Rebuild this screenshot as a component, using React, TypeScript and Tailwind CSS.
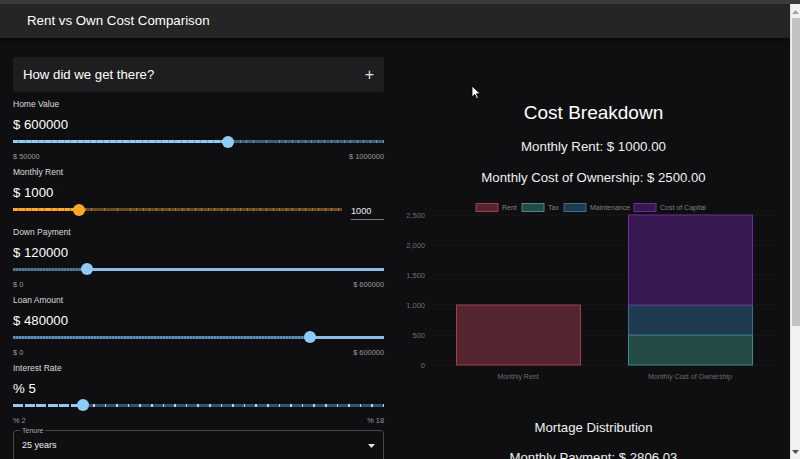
import React from 'react';

interface SliderProps {
  pct: number;
  color: string; // thumb + track colour
  activeTrack: string; // classes for left part
  restTrack: string; // classes for right part
}

function Slider({ pct, color, activeTrack, restTrack }: SliderProps) {
  return (
    <div className="relative h-[13px] flex items-center">
      <div className={`h-[3px] ${activeTrack}`} style={{ width: `${pct}%` }} />
      <div className={`h-[3px] flex-1 ${restTrack}`} />
      <div
        className="absolute top-[0.5px] w-[12px] h-[12px] rounded-full -ml-[6px]"
        style={{ left: `${pct}%`, backgroundColor: color }}
      />
    </div>
  );
}

function FieldLabel({ children }: { children: React.ReactNode }) {
  return <div className="h-[13px] leading-[13px] text-[8.5px] text-[#dcdcdc]">{children}</div>;
}

function FieldValue({ children }: { children: React.ReactNode }) {
  return <div className="mt-[4px] h-[20px] leading-[20px] text-[13.2px] text-white">{children}</div>;
}

function MinMax({ min, max }: { min: string; max: string }) {
  return (
    <div className="mt-[4px] mb-[4px] h-[10px] leading-[10px] flex justify-between text-[7.4px] text-[#9a9a9a]">
      <span>{min}</span>
      <span>{max}</span>
    </div>
  );
}

const dotsDark = 'bg-[#90caf9] bg-[repeating-linear-gradient(90deg,transparent_0_5.5px,rgba(0,0,0,0.22)_5.5px_6.5px)]';
const dotsDim = 'bg-[#3f5f78] bg-[repeating-linear-gradient(90deg,transparent_0_5.5px,rgba(170,210,240,0.45)_5.5px_6.5px)]';

const chartFont = 'Liberation Sans, Arial, sans-serif';

function CostChart() {
  const y = (v: number) => 166 - v * 0.06;
  const ticks = [2500, 2000, 1500, 1000, 500, 0];
  const legend = [
    { x: 79, label: 'Rent', fill: '#55252f', stroke: '#a33d58' },
    { x: 125, label: 'Tax', fill: '#244a45', stroke: '#3f8f88' },
    { x: 167, label: 'Maintenance', fill: '#1f3b50', stroke: '#3d6d90' },
    { x: 237, label: 'Cost of Capital', fill: '#371850', stroke: '#6b2c9c' },
  ];
  return (
    <svg width="393" height="184" viewBox="0 0 393 184" className="block">
      {legend.map(l => (
        <g key={l.label}>
          <rect x={l.x} y={4.5} width={22} height={8} fill={l.fill} stroke={l.stroke} strokeWidth={1} />
          <text x={l.x + 26} y={11} fontSize={7} fill="#808080" fontFamily={chartFont}>
            {l.label}
          </text>
        </g>
      ))}
      {ticks.map(t => (
        <g key={t}>
          <line x1={35} x2={380} y1={y(t)} y2={y(t)} stroke="#18181a" strokeWidth={1} />
          <text x={28} y={y(t) + 2.5} textAnchor="end" fontSize={7.5} fill="#6e6e6e" fontFamily={chartFont}>
            {t.toLocaleString('en-US')}
          </text>
        </g>
      ))}
      {/* rent bar */}
      <rect x={59.5} y={y(1000)} width={124} height={y(0) - y(1000)} fill="#55252f" stroke="#a33d58" strokeWidth={1} />
      {/* ownership stack */}
      <rect x={231.5} y={y(500)} width={124} height={y(0) - y(500)} fill="#244a45" stroke="#3f8f88" strokeWidth={1} />
      <rect x={231.5} y={y(1000)} width={124} height={y(500) - y(1000)} fill="#1f3b50" stroke="#3d6d90" strokeWidth={1} />
      <rect x={231.5} y={y(2500)} width={124} height={y(1000) - y(2500)} fill="#371850" stroke="#6b2c9c" strokeWidth={1} />
      <text x={121} y={179.5} textAnchor="middle" fontSize={7} fill="#6e6e6e" fontFamily={chartFont}>
        Monthly Rent
      </text>
      <text x={293} y={179.5} textAnchor="middle" fontSize={7} fill="#6e6e6e" fontFamily={chartFont}>
        Monthly Cost of Ownership
      </text>
    </svg>
  );
}

export default function App() {
  return (
    <div className="h-[459px] w-[800px] overflow-hidden bg-[#0f0f11] flex flex-col font-['Liberation_Sans',Arial,sans-serif] text-white">
      <div className="h-[4px] bg-[#3a3a3a]" />
      <div className="flex flex-1 min-h-0">
        <div className="flex-1 flex flex-col min-w-0 overflow-hidden">
          {/* App bar */}
          <div className="h-[34px] shrink-0 bg-[#252525] flex items-center pl-[27px] text-[13.3px] shadow-[0_2px_4px_rgba(0,0,0,0.5)] relative z-10">
            Rent vs Own Cost Comparison
          </div>

          <div className="grid grid-cols-[397px_1fr] flex-1">
            {/* Inputs */}
            <div className="px-[13px] pt-[19px]">
              <div className="h-[35px] bg-[#1e1e20] rounded-[3px] flex items-center justify-between pl-[10px] pr-[10px]">
                <span className="text-[13.2px]">How did we get there?</span>
                <span className="text-[16px] leading-none text-[#e0e0e0]">+</span>
              </div>

              <div className="mt-[6px]">
                <FieldLabel>Home Value</FieldLabel>
                <FieldValue>$ 600000</FieldValue>
                <Slider pct={58} color="#90caf9" activeTrack={dotsDark} restTrack={dotsDim} />
                <MinMax min="$ 50000" max="$ 1000000" />
              </div>

              <div>
                <FieldLabel>Monthly Rent</FieldLabel>
                <FieldValue>$ 1000</FieldValue>
                <div className="flex items-start gap-[9px] mb-[6px]">
                  <div className="flex-1">
                    <Slider
                      pct={20}
                      color="#ffa726"
                      activeTrack="bg-[#ffa726] bg-[repeating-linear-gradient(90deg,transparent_0_5.5px,rgba(0,0,0,0.25)_5.5px_6.5px)]"
                      restTrack="bg-[#6b4a1c] bg-[repeating-linear-gradient(90deg,transparent_0_5.5px,rgba(255,190,90,0.4)_5.5px_6.5px)]"
                    />
                  </div>
                  <div className="w-[33px] h-[17px] mt-[-0.5px] leading-[16px] text-[9.2px] border-b border-[#777] text-[#eee]">
                    1000
                  </div>
                </div>
              </div>

              <div>
                <FieldLabel>Down Payment</FieldLabel>
                <FieldValue>$ 120000</FieldValue>
                <Slider
                  pct={20}
                  color="#90caf9"
                  activeTrack="bg-[#4f7797] bg-[repeating-linear-gradient(90deg,transparent_0_2px,rgba(0,0,0,0.25)_2px_3px)]"
                  restTrack="bg-[#8cbde2]"
                />
                <MinMax min="$ 0" max="$ 600000" />
              </div>

              <div>
                <FieldLabel>Loan Amount</FieldLabel>
                <FieldValue>$ 480000</FieldValue>
                <Slider
                  pct={80}
                  color="#90caf9"
                  activeTrack="bg-[#5f8cb0] bg-[repeating-linear-gradient(90deg,transparent_0_2px,rgba(0,0,0,0.25)_2px_3px)]"
                  restTrack="bg-[#8cbde2]"
                />
                <MinMax min="$ 0" max="$ 600000" />
              </div>

              <div>
                <FieldLabel>Interest Rate</FieldLabel>
                <FieldValue>% 5</FieldValue>
                <Slider
                  pct={18.75}
                  color="#90caf9"
                  activeTrack="bg-[#90caf9] bg-[repeating-linear-gradient(90deg,transparent_0_10px,#0f0f11_10px_11.6px)]"
                  restTrack="bg-[#35536a] bg-[repeating-linear-gradient(90deg,transparent_0_10px,#b6d6ee_10px_11.6px)]"
                />
                <div className="mt-[4px] h-[10px] leading-[10px] flex justify-between text-[7.4px] text-[#9a9a9a]">
                  <span>% 2</span>
                  <span>% 18</span>
                </div>
              </div>

              <div className="mt-[4px] relative h-[44px] border border-[#4a4a4c] rounded-[4px] flex items-center justify-between pl-[8px] pr-[8px]">
                <span className="absolute -top-[5px] left-[6px] px-[2px] bg-[#0f0f11] text-[7px] leading-[9px] text-[#aaa]">
                  Tenure
                </span>
                <span className="text-[9px] text-[#eee] -mt-[12px]">25 years</span>
                <svg width="7" height="4" viewBox="0 0 7 4" className="-mt-[12px]">
                  <path d="M0 0 L7 0 L3.5 4 Z" fill="#e0e0e0" />
                </svg>
              </div>
            </div>

            {/* Results */}
            <div className="relative flex flex-col items-center pt-[63px]">
              <svg width="11" height="15" viewBox="0 0 11 15" className="absolute left-[74px] top-[47px]">
                <path d="M1 1 L1 12 L3.8 9.4 L5.8 13.8 L7.4 13.1 L5.5 8.8 L9.3 8.8 Z" fill="#fff" stroke="#000" strokeWidth={0.8} />
              </svg>
              <h2 className="text-[19px] leading-[24px] text-white">Cost Breakdown</h2>
              <div className="mt-[13px] text-[13.3px] leading-[18px] text-[#f0f0f0]">Monthly Rent: $ 1000.00</div>
              <div className="mt-[13px] text-[13.2px] leading-[18px] text-[#f0f0f0]">
                Monthly Cost of Ownership: $ 2500.00
              </div>
              <div className="mt-[12px]">
                <CostChart />
              </div>
              <h3 className="mt-[35px] text-[13.2px] leading-[20px] text-[#f0f0f0]">Mortage Distribution</h3>
              <div className="mt-[11px] text-[13.2px] leading-[18px] text-[#f0f0f0]">Monthly Payment: $ 2806.03</div>
            </div>
          </div>
        </div>

        {/* Scrollbar */}
        <div className="w-[10px] bg-[#f1f1f1] border-l border-[#e0e0e0] flex flex-col items-center">
          <svg width="7" height="5" viewBox="0 0 7 5" className="mt-[6px]">
            <path d="M0 4 L3.5 0 L7 4 Z" fill="#a3a3a3" />
          </svg>
          <div className="mt-[3px] w-[8px] h-[308px] bg-[#c1c1c1]" />
          <div className="flex-1" />
          <svg width="7" height="5" viewBox="0 0 7 5" className="mb-[4px]">
            <path d="M0 0 L7 0 L3.5 4 Z" fill="#505050" />
          </svg>
        </div>
      </div>
    </div>
  );
}
